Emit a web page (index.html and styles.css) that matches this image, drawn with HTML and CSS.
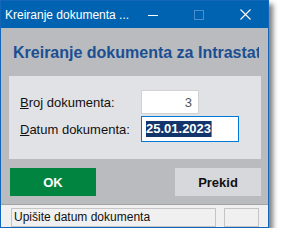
FILE: index.html
```html
<!DOCTYPE html>
<html lang="hr">
<head>
    <meta charset="UTF-8">
    <title>Kreiranje dokumenta za Intrastat</title>
    <link rel="stylesheet" href="styles.css">
</head>
<body>
    <div class="window">
        <div class="titlebar">
            <span class="title">Kreiranje dokumenta ...</span>
            <div class="controls">
                <span class="ctl"><svg width="10" height="10" viewBox="0 0 10 10"><path d="M0 5.5h10" stroke="#fff" stroke-width="1"/></svg></span>
                <span class="ctl"><svg width="10" height="10" viewBox="0 0 10 10"><rect x="0.5" y="0.5" width="9" height="9" fill="none" stroke="#4a8fcc" stroke-width="1"/></svg></span>
                <span class="ctl"><svg width="11" height="11" viewBox="0 0 11 11"><path d="M0.5 0.5l10 10M10.5 0.5l-10 10" stroke="#fff" stroke-width="1.1"/></svg></span>
            </div>
        </div>

        <div class="content">
            <h1 class="heading">Kreiranje dokumenta za Intrastat</h1>

            <div class="panel">
                <div class="row">
                    <label class="label"><u>B</u>roj dokumenta:</label>
                    <div class="field num">3</div>
                </div>
                <div class="row">
                    <label class="label"><u>D</u>atum dokumenta:</label>
                    <div class="field date"><span class="sel">25.01.2023</span><span class="caret"></span></div>
                </div>
            </div>

            <div class="buttons">
                <button class="btn ok">OK</button>
                <button class="btn cancel">Prekid</button>
            </div>
        </div>

        <div class="statusbar">
            <div class="status-text">Upišite datum dokumenta</div>
            <div class="status-extra"></div>
        </div>
    </div>
</body>
</html>
```

FILE: styles.css
```css
body {
    margin: 0;
    background: #fff;
    font-family: "Liberation Sans", Arial, sans-serif;
}
.window {
    width: 267px;
    border: 1px solid #1467b8;
    background: #b9bbbe;
    box-shadow: 4px 4px 5px rgba(0, 0, 0, 0.5);
}
.titlebar {
    height: 27px;
    background: #0063b1;
    display: flex;
    align-items: center;
    color: #fff;
}
.title {
    flex: 1;
    padding-left: 4px;
    font-size: 12px;
    white-space: nowrap;
}
.controls {
    display: flex;
    height: 100%;
}
.ctl {
    width: 46px;
    display: flex;
    align-items: center;
    justify-content: center;
}
.content {
    padding: 16px 7px 8px 8px;
}
.heading {
    margin: 0 2px 14px 4px;
    font-size: 16px;
    line-height: 18px;
    font-weight: bold;
    color: #1b4f93;
    white-space: nowrap;
    overflow: hidden;
}
.panel {
    background: #e1e2e5;
    padding: 14px 0 17px 11px;
    display: flex;
    flex-direction: column;
    gap: 2px;
}
.row {
    display: flex;
    align-items: center;
}
.label {
    width: 121px;
    font-size: 13px;
    color: #111;
}
.field {
    box-sizing: border-box;
    background: #fff;
    font-size: 13px;
    display: flex;
    align-items: center;
}
.num {
    width: 58px;
    height: 24px;
    border: 1px solid #d2d2d2;
    justify-content: flex-end;
    padding-right: 6px;
    color: #555;
}
.date {
    width: 98px;
    height: 26px;
    border: 1px solid #0078d7;
    padding-left: 4px;
}
.sel {
    background: #12356b;
    color: #fff;
    font-weight: bold;
    line-height: 16px;
}
.caret {
    width: 1px;
    height: 16px;
    background: #c8701e;
}
.buttons {
    margin: 9px 0 0 1px;
    display: flex;
    justify-content: space-between;
}
.btn {
    width: 86px;
    height: 28px;
    border: none;
    font-family: "Liberation Sans", Arial, sans-serif;
    font-size: 13px;
    font-weight: bold;
    cursor: pointer;
}
.ok {
    background: #00843f;
    color: #fff;
}
.cancel {
    background: #d7d8db;
    color: #111;
}
.statusbar {
    border-top: 1px solid #a3a3a3;
    background: #f0f0f0;
    height: 23px;
    box-sizing: border-box;
    padding: 3px 9px 0 10px;
    display: flex;
    gap: 8px;
}
.status-text, .status-extra {
    box-sizing: border-box;
    height: 19px;
    border: 1px solid #c4c4c4;
    font-size: 12px;
    color: #111;
    line-height: 17px;
    padding-left: 2px;
}
.status-text {
    width: 206px;
}
.status-extra {
    width: 35px;
}
```
